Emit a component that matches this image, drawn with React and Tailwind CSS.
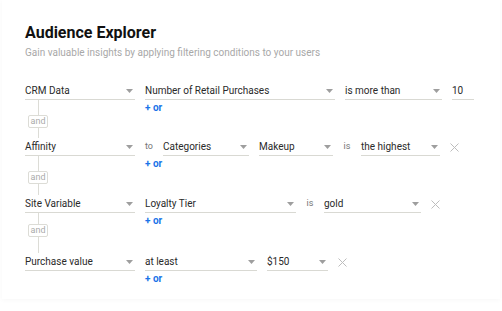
import React from 'react';

const Arrow = () => (
  <svg width="7" height="4" viewBox="0 0 7 4" className="shrink-0">
    <path d="M0 0h7L3.5 4z" fill="#9e9e9e" />
  </svg>
);

const Close = () => (
  <svg width="9" height="9" viewBox="0 0 9 9" className="shrink-0">
    <path d="M0.5 0.5l8 8M8.5 0.5l-8 8" stroke="#bdbdbd" strokeWidth="1" fill="none" />
  </svg>
);

function Select({ value, w, arrow = true }) {
  return (
    <div className={`flex items-center justify-between h-[18px] border-b border-[#d9d9d3] pr-[2px] shrink-0 ${w}`}>
      <span className="whitespace-nowrap">{value}</span>
      {arrow && <Arrow />}
    </div>
  );
}

const Label = ({ children }) => (
  <span className="text-[9px] text-[#757575] w-[8px] text-center shrink-0">{children}</span>
);

function Connector({ h, top }) {
  return (
    <div className={`flex ${h}`}>
      <div className="w-[120px] shrink-0">
        <div className="w-[26px] h-full flex flex-col items-center">
          <div className={`w-px bg-[#dcdcd6] ${top}`} />
          <div className="h-[13px] w-[20px] border border-[#dcdcd6] rounded-[2px] flex items-center justify-center text-[9px] leading-none text-[#aaaaaa] bg-white">
            and
          </div>
          <div className="w-px flex-1 bg-[#dcdcd6]" />
        </div>
      </div>
      <OrLink />
    </div>
  );
}

const OrLink = () => (
  <div className="mt-[1px] text-[10px] leading-[14px] font-bold text-[#1a73e8]">+ or</div>
);

export default function App() {
  return (
    <div className="w-[502px] h-[311px] bg-white overflow-hidden font-['Roboto',sans-serif]">
      <div className="mx-[2px] h-[299px] bg-white shadow-[0_1px_5px_rgba(0,0,0,0.035)] pl-[23px] pt-[23px]">
        <h1 className="text-[16px] leading-[20px] font-bold text-[#111]">Audience Explorer</h1>
        <p className="mt-[3px] text-[10px] leading-[14px] text-[#a8a8a8]">
          Gain valuable insights by applying filtering conditions to your users
        </p>

        <div className="mt-[22px] text-[10px] text-[#2a2a2a]">
          {/* CRM */}
          <div className="flex items-center gap-[10px]">
            <Select value="CRM Data" w="w-[110px]" />
            <Select value="Number of Retail Purchases" w="w-[190px]" />
            <Select value="is more than" w="w-[97px]" />
            <Select value="10" w="w-[22px]" arrow={false} />
          </div>
          <Connector h="h-[38px]" top="h-[15px]" />

          {/* Affinity */}
          <div className="flex items-center gap-[10px]">
            <Select value="Affinity" w="w-[110px]" />
            <Label>to</Label>
            <Select value="Categories" w="w-[86px]" />
            <Select value="Makeup" w="w-[74px]" />
            <Label>is</Label>
            <Select value="the highest" w="w-[79px]" />
            <Close />
          </div>
          <Connector h="h-[39px]" top="h-[15px]" />

          {/* Site Variable */}
          <div className="flex items-center gap-[10px]">
            <Select value="Site Variable" w="w-[110px]" />
            <Select value="Loyalty Tier" w="w-[151px]" />
            <Label>is</Label>
            <Select value="gold" w="w-[97px]" />
            <Close />
          </div>
          <Connector h="h-[40px]" top="h-[11px]" />

          {/* Purchase value */}
          <div className="flex items-center gap-[10px]">
            <Select value="Purchase value" w="w-[110px]" />
            <Select value="at least" w="w-[112px]" />
            <Select value="$150" w="w-[61px]" />
            <Close />
          </div>
          <div className="flex">
            <div className="w-[120px] shrink-0" />
            <OrLink />
          </div>
        </div>
      </div>
    </div>
  );
}
